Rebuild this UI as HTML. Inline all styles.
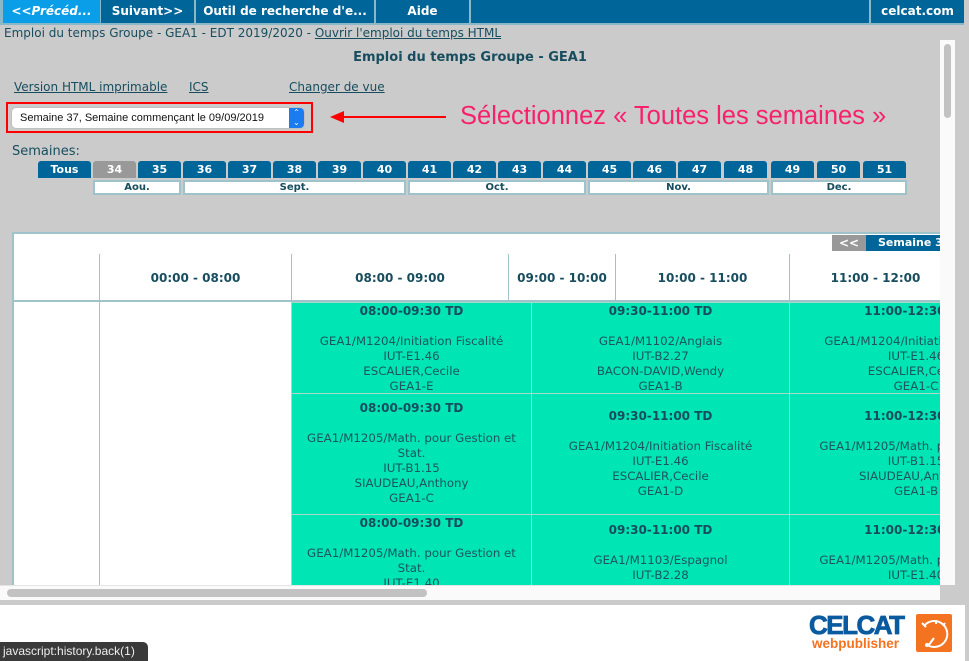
<!DOCTYPE html>
<html><head><meta charset="utf-8"><style>
*{margin:0;padding:0;box-sizing:border-box}
body{width:969px;height:661px;background:#cbcbcb;position:relative;overflow:hidden;font-family:"DejaVu Sans","Liberation Sans",sans-serif;color:#174d5e}
.a{position:absolute}
.nav{top:0;height:23px;background:#006699;color:#fff;font-weight:bold;font-size:12px;text-align:center;line-height:23px}
.clip{left:0;top:24px;width:940px;height:561px;overflow:hidden}
.wk{top:137px;height:17px;background:#006699;color:#fff;font-weight:bold;font-size:11px;text-align:center;line-height:17px;border-radius:3px 3px 0 0}
.mo{top:156px;height:15px;background:#fff;border:2px solid #9fc3ca;font-weight:bold;font-size:10px;text-align:center;line-height:11px}
.ev{background:#00e5b4;text-align:center;font-size:11.8px;line-height:15px;border:1px solid #a8d8c8;color:#1d5560;padding-top:1px;overflow:hidden;white-space:nowrap}
.ev b{display:block;margin-bottom:15px;color:#174d5e;font-size:12px}
.hd{top:230px;height:48px;background:#fff;border-right:1px solid #9fc3ca;border-bottom:2px solid #9fc3ca;font-weight:bold;font-size:12px;text-align:center;line-height:48px}
u{color:#174d5e}
</style></head><body>
<div class="a" style="left:0;top:0;width:969px;height:25px;background:#8ab8c8"></div>
<div class="a nav" style="left:3px;width:97px;background:#0a9ee8;font-style:italic">&lt;&lt;Précéd...</div>
<div class="a nav" style="left:101px;width:93px">Suivant&gt;&gt;</div>
<div class="a nav" style="left:196px;width:178px">Outil de recherche d'e...</div>
<div class="a nav" style="left:376px;width:93px">Aide</div>
<div class="a nav" style="left:471px;width:398px"></div>
<div class="a nav" style="left:871px;width:93px">celcat.com</div>
<div class="a" style="left:964px;top:0;width:5px;height:25px;background:#cbcbcb"></div>
<div class="a" style="left:940px;top:40px;width:15px;height:545px;background:#fafafa"></div>
<div class="a" style="left:944px;top:44px;width:7px;height:74px;background:#c2c2c2;border-radius:4px"></div>
<div class="a clip">
<div class="a" style="left:4px;top:2px;font-size:12px;white-space:nowrap">Emploi du temps Groupe - GEA1 - EDT 2019/2020 - <u>Ouvrir l'emploi du temps HTML</u></div>
<div class="a" style="left:0;width:940px;top:26px;text-align:center;font-weight:bold;font-size:13px">Emploi du temps Groupe - GEA1</div>
<div class="a" style="left:14px;top:56px;font-size:12px"><u>Version HTML imprimable</u></div>
<div class="a" style="left:189px;top:56px;font-size:12px"><u>ICS</u></div>
<div class="a" style="left:289px;top:56px;font-size:12px"><u>Changer de vue</u></div>
<div class="a" style="left:6px;top:78px;width:307px;height:31px;border:2px solid #f00"></div>
<div class="a" style="left:12px;top:84px;width:292px;height:20px;background:#fff;border-radius:4px;box-shadow:0 0 1px #888;font-size:11px;line-height:20px;padding-left:8px;color:#111;font-family:'Liberation Sans',sans-serif">Semaine 37, Semaine commençant le 09/09/2019</div>
<div class="a" style="left:289px;top:84px;width:15px;height:20px;background:#1a7cf0;border-radius:0 4px 4px 0;color:#fff;font-size:8px;text-align:center;line-height:10px">⌃<br>⌄</div>
<svg class="a" style="left:330px;top:86px" width="118" height="14"><line x1="12" y1="7" x2="116" y2="7" stroke="#f00" stroke-width="2"/><polygon points="0,7 14,1 14,13" fill="#f00"/></svg>
<div class="a" style="left:460px;top:78px;font-size:25.5px;color:#f7216b;font-family:'Liberation Sans',sans-serif;white-space:nowrap">Sélectionnez « Toutes les semaines »</div>
<div class="a" style="left:12px;top:120px;font-size:13px">Semaines:</div>
<div class="a wk" style="left:38px;width:53px">Tous</div>
<div class="a wk" style="left:93px;width:43px;background:#999">34</div>
<div class="a wk" style="left:138px;width:43px">35</div>
<div class="a wk" style="left:183px;width:43px">36</div>
<div class="a wk" style="left:228px;width:43px">37</div>
<div class="a wk" style="left:273px;width:43px">38</div>
<div class="a wk" style="left:318px;width:43px">39</div>
<div class="a wk" style="left:363px;width:43px">40</div>
<div class="a wk" style="left:408px;width:43px">41</div>
<div class="a wk" style="left:453px;width:43px">42</div>
<div class="a wk" style="left:498px;width:43px">43</div>
<div class="a wk" style="left:543px;width:43px">44</div>
<div class="a wk" style="left:588px;width:43px">45</div>
<div class="a wk" style="left:633px;width:43px">46</div>
<div class="a wk" style="left:678px;width:43px">47</div>
<div class="a wk" style="left:724px;width:43px">48</div>
<div class="a wk" style="left:771px;width:43px">49</div>
<div class="a wk" style="left:817px;width:43px">50</div>
<div class="a wk" style="left:863px;width:43px">51</div>
<div class="a mo" style="left:93px;width:88px">Aou.</div>
<div class="a mo" style="left:183px;width:223px">Sept.</div>
<div class="a mo" style="left:408px;width:178px">Oct.</div>
<div class="a mo" style="left:588px;width:181px">Nov.</div>
<div class="a mo" style="left:771px;width:136px">Dec.</div>
<div class="a" style="left:12px;top:208px;width:940px;height:360px;background:#fff;border-left:2px solid #9fc3ca;border-top:2px solid #9fc3ca"></div>
<div class="a" style="left:832px;top:211px;width:34px;height:16px;background:#999;color:#fff;font-weight:bold;font-size:12px;text-align:center;line-height:16px">&lt;&lt;</div>
<div class="a" style="left:866px;top:211px;width:80px;height:16px;background:#006699;color:#fff;font-weight:bold;font-size:11px;line-height:16px;padding-left:12px;white-space:nowrap">Semaine 37</div>
<div class="a hd" style="left:14px;width:86px"></div>
<div class="a hd" style="left:100px;width:192px">00:00 - 08:00</div>
<div class="a hd" style="left:292px;width:217px">08:00 - 09:00</div>
<div class="a hd" style="left:509px;width:107px">09:00 - 10:00</div>
<div class="a hd" style="left:616px;width:174px">10:00 - 11:00</div>
<div class="a hd" style="left:790px;width:172px">11:00 - 12:00</div>
<div class="a" style="left:99px;top:278px;width:1px;height:300px;background:#9fc3ca"></div>
<div class="a ev" style="left:291px;top:278px;width:241px;height:92px"><b>08:00-09:30 TD</b>GEA1/M1204/Initiation Fiscalité<br>IUT-E1.46<br>ESCALIER,Cecile<br>GEA1-E</div>
<div class="a ev" style="left:291px;top:369px;width:241px;height:122px;padding-top:7px"><b>08:00-09:30 TD</b>GEA1/M1205/Math. pour Gestion et<br>Stat.<br>IUT-B1.15<br>SIAUDEAU,Anthony<br>GEA1-C</div>
<div class="a ev" style="left:291px;top:490px;width:241px;height:100px"><b>08:00-09:30 TD</b>GEA1/M1205/Math. pour Gestion et<br>Stat.<br>IUT-E1.40</div>
<div class="a ev" style="left:531px;top:278px;width:259px;height:92px"><b>09:30-11:00 TD</b>GEA1/M1102/Anglais<br>IUT-B2.27<br>BACON-DAVID,Wendy<br>GEA1-B</div>
<div class="a ev" style="left:531px;top:369px;width:259px;height:122px;padding-top:15px"><b>09:30-11:00 TD</b>GEA1/M1204/Initiation Fiscalité<br>IUT-E1.46<br>ESCALIER,Cecile<br>GEA1-D</div>
<div class="a ev" style="left:531px;top:490px;width:259px;height:100px;padding-top:8px"><b>09:30-11:00 TD</b>GEA1/M1103/Espagnol<br>IUT-B2.28</div>
<div class="a ev" style="left:789px;top:278px;width:254px;height:92px"><b>11:00-12:30 TD</b>GEA1/M1204/Initiation Fiscalité<br>IUT-E1.46<br>ESCALIER,Cecile<br>GEA1-C</div>
<div class="a ev" style="left:789px;top:369px;width:254px;height:122px;padding-top:15px"><b>11:00-12:30 TD</b>GEA1/M1205/Math. pour Gestion<br>IUT-B1.15<br>SIAUDEAU,Anthony<br>GEA1-B</div>
<div class="a ev" style="left:789px;top:490px;width:254px;height:100px;padding-top:8px"><b>11:00-12:30 TD</b>GEA1/M1205/Math. pour Gestion<br>IUT-E1.40</div>
</div>
<div class="a" style="left:0;top:585px;width:940px;height:15px;background:#fafafa;border-top:1px solid #e4e4e4"></div>
<div class="a" style="left:7px;top:589px;width:420px;height:8px;background:#c2c2c2;border-radius:4px"></div>
<div class="a" style="left:0;top:605px;width:965px;height:56px;background:#fff"></div>
<div class="a" style="left:809px;top:610px;font-family:'Liberation Sans',sans-serif;font-weight:900;font-size:26px;color:#0a5aa0;letter-spacing:-1.5px;-webkit-text-stroke:0.8px #0a5aa0">CELCAT</div>
<div class="a" style="left:812px;top:636px;font-family:'Liberation Sans',sans-serif;font-weight:bold;font-size:13.5px;color:#f47320">webpublisher</div>
<svg class="a" style="left:916px;top:614px" width="36" height="38"><rect width="36" height="38" rx="2" fill="#f47320"/><path d="M8 12 A13 13 0 1 1 10 30" fill="none" stroke="#fff" stroke-width="2"/><line x1="6" y1="9" x2="10" y2="13" stroke="#fff" stroke-width="2"/><line x1="20" y1="6" x2="20" y2="10" stroke="#fff" stroke-width="2"/><line x1="29" y1="9" x2="27" y2="12" stroke="#fff" stroke-width="2"/><line x1="12" y1="32" x2="18" y2="24" stroke="#fff" stroke-width="2"/><circle cx="11" cy="31" r="2" fill="#fff"/></svg>
<div class="a" style="left:0;top:642px;width:148px;height:19px;background:#3a3a3a;color:#eee;font-size:12px;line-height:19px;padding-left:3px;border-radius:0 5px 0 0;font-family:'Liberation Sans',sans-serif">javascript:history.back(1)</div>
</body></html>
